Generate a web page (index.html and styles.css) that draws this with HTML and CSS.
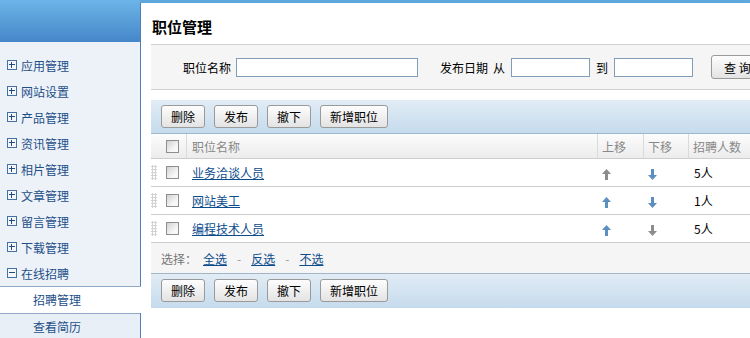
FILE: index.html
```html
<!DOCTYPE html>
<html lang="zh-CN">
<head>
    <meta charset="UTF-8">
    <title>职位管理</title>
    <link rel="stylesheet" href="styles.css">
</head>
<body>
<div class="layout">
    <!-- 左侧菜单 -->
    <aside class="sidebar">
        <div class="sidebar-head"></div>
        <ul class="menu">
            <li><a class="menu-link" href="#"><svg class="toggle" width="10" height="10" viewBox="0 0 10 10" shape-rendering="crispEdges"><rect x="0.5" y="0.5" width="9" height="9" fill="#f3f6fa" stroke="#44719f"/><path d="M2 4.5h6M4.5 2v6" stroke="#1f4d80"/></svg>应用管理</a></li>
            <li><a class="menu-link" href="#"><svg class="toggle" width="10" height="10" viewBox="0 0 10 10" shape-rendering="crispEdges"><rect x="0.5" y="0.5" width="9" height="9" fill="#f3f6fa" stroke="#44719f"/><path d="M2 4.5h6M4.5 2v6" stroke="#1f4d80"/></svg>网站设置</a></li>
            <li><a class="menu-link" href="#"><svg class="toggle" width="10" height="10" viewBox="0 0 10 10" shape-rendering="crispEdges"><rect x="0.5" y="0.5" width="9" height="9" fill="#f3f6fa" stroke="#44719f"/><path d="M2 4.5h6M4.5 2v6" stroke="#1f4d80"/></svg>产品管理</a></li>
            <li><a class="menu-link" href="#"><svg class="toggle" width="10" height="10" viewBox="0 0 10 10" shape-rendering="crispEdges"><rect x="0.5" y="0.5" width="9" height="9" fill="#f3f6fa" stroke="#44719f"/><path d="M2 4.5h6M4.5 2v6" stroke="#1f4d80"/></svg>资讯管理</a></li>
            <li><a class="menu-link" href="#"><svg class="toggle" width="10" height="10" viewBox="0 0 10 10" shape-rendering="crispEdges"><rect x="0.5" y="0.5" width="9" height="9" fill="#f3f6fa" stroke="#44719f"/><path d="M2 4.5h6M4.5 2v6" stroke="#1f4d80"/></svg>相片管理</a></li>
            <li><a class="menu-link" href="#"><svg class="toggle" width="10" height="10" viewBox="0 0 10 10" shape-rendering="crispEdges"><rect x="0.5" y="0.5" width="9" height="9" fill="#f3f6fa" stroke="#44719f"/><path d="M2 4.5h6M4.5 2v6" stroke="#1f4d80"/></svg>文章管理</a></li>
            <li><a class="menu-link" href="#"><svg class="toggle" width="10" height="10" viewBox="0 0 10 10" shape-rendering="crispEdges"><rect x="0.5" y="0.5" width="9" height="9" fill="#f3f6fa" stroke="#44719f"/><path d="M2 4.5h6M4.5 2v6" stroke="#1f4d80"/></svg>留言管理</a></li>
            <li><a class="menu-link" href="#"><svg class="toggle" width="10" height="10" viewBox="0 0 10 10" shape-rendering="crispEdges"><rect x="0.5" y="0.5" width="9" height="9" fill="#f3f6fa" stroke="#44719f"/><path d="M2 4.5h6M4.5 2v6" stroke="#1f4d80"/></svg>下载管理</a></li>
            <li class="open">
                <a class="menu-link" href="#"><svg class="toggle" width="10" height="10" viewBox="0 0 10 10" shape-rendering="crispEdges"><rect x="0.5" y="0.5" width="9" height="9" fill="#f3f6fa" stroke="#44719f"/><path d="M2 4.5h6" stroke="#1f4d80"/></svg>在线招聘</a>
                <ul class="submenu">
                    <li class="current"><a href="#">招聘管理</a></li>
                    <li><a href="#">查看简历</a></li>
                </ul>
            </li>
        </ul>
    </aside>

    <!-- 主内容 -->
    <main class="main">
        <div class="panel">
            <h1 class="panel-title">职位管理</h1>

            <form class="search">
                <label>职位名称</label>
                <input class="field-name" type="text">
                <label class="label-date">发布日期</label>
                <span class="from">从</span>
                <input class="field-date" type="text">
                <span class="to">到</span>
                <input class="field-date" type="text">
                <button class="btn btn-search" type="button">查 询</button>
            </form>

            <div class="toolbar toolbar-top">
                <button class="btn" type="button">删除</button>
                <button class="btn" type="button">发布</button>
                <button class="btn" type="button">撤下</button>
                <button class="btn" type="button">新增职位</button>
            </div>

            <table class="grid">
                <colgroup>
                    <col style="width:35px">
                    <col style="width:411px">
                    <col style="width:46px">
                    <col style="width:45px">
                    <col>
                </colgroup>
                <thead>
                    <tr>
                        <th class="col-check"><input class="check" type="checkbox"></th>
                        <th class="col-name">职位名称</th>
                        <th>上移</th>
                        <th>下移</th>
                        <th>招聘人数</th>
                    </tr>
                </thead>
                <tbody>
                    <tr>
                        <td><div class="row-select"><span class="grip"></span><input class="check" type="checkbox"></div></td>
                        <td class="col-name"><a href="#">业务洽谈人员</a></td>
                        <td class="col-move"><svg class="arrow off" width="9" height="11" viewBox="0 0 9 11"><path d="M4.5 0L9 5H6V11H3V5H0Z"/></svg></td>
                        <td class="col-move"><svg class="arrow" width="9" height="11" viewBox="0 0 9 11"><path d="M4.5 11L9 6H6V0H3V6H0Z"/></svg></td>
                        <td class="col-count">5人</td>
                    </tr>
                    <tr>
                        <td><div class="row-select"><span class="grip"></span><input class="check" type="checkbox"></div></td>
                        <td class="col-name"><a href="#">网站美工</a></td>
                        <td class="col-move"><svg class="arrow" width="9" height="11" viewBox="0 0 9 11"><path d="M4.5 0L9 5H6V11H3V5H0Z"/></svg></td>
                        <td class="col-move"><svg class="arrow" width="9" height="11" viewBox="0 0 9 11"><path d="M4.5 11L9 6H6V0H3V6H0Z"/></svg></td>
                        <td class="col-count">1人</td>
                    </tr>
                    <tr>
                        <td><div class="row-select"><span class="grip"></span><input class="check" type="checkbox"></div></td>
                        <td class="col-name"><a href="#">编程技术人员</a></td>
                        <td class="col-move"><svg class="arrow" width="9" height="11" viewBox="0 0 9 11"><path d="M4.5 0L9 5H6V11H3V5H0Z"/></svg></td>
                        <td class="col-move"><svg class="arrow off" width="9" height="11" viewBox="0 0 9 11"><path d="M4.5 11L9 6H6V0H3V6H0Z"/></svg></td>
                        <td class="col-count">5人</td>
                    </tr>
                </tbody>
            </table>

            <div class="select-bar">
                <span>选择：</span>
                <a href="#">全选</a><span class="sep">-</span>
                <a href="#">反选</a><span class="sep">-</span>
                <a href="#">不选</a>
            </div>

            <div class="toolbar">
                <button class="btn" type="button">删除</button>
                <button class="btn" type="button">发布</button>
                <button class="btn" type="button">撤下</button>
                <button class="btn" type="button">新增职位</button>
            </div>
        </div>
    </main>
</div>
</body>
</html>
```

FILE: styles.css
```css
* {
    margin: 0;
    padding: 0;
    box-sizing: border-box;
}

html, body {
    height: 100%;
    overflow: hidden;
}

body {
    font-family: "Noto Sans CJK SC", "Liberation Sans", sans-serif;
    font-size: 12px;
    color: #000;
    background: #fff;
}

a {
    color: #0b4c8c;
}

.layout {
    display: flex;
    width: 820px;
    height: 100%;
}

/* 左侧菜单 */
.sidebar {
    width: 140px;
    flex: none;
    background: #edf2f8;
}

.sidebar-head {
    height: 42px;
    background: linear-gradient(#6cb5e7, #4586c9);
}

.menu {
    list-style: none;
    padding-top: 10px;
}

.menu-link {
    display: flex;
    align-items: center;
    height: 26px;
    padding-left: 7px;
    color: #1d4f88;
    text-decoration: none;
}

.toggle {
    margin-right: 4px;
    flex: none;
}

.submenu {
    list-style: none;
}

.submenu li {
    height: 27px;
    border-top: 1px solid #8eaac6;
    background: #e9eff6;
}

.submenu li.current {
    position: relative;
    margin-right: -1px;
    background: #fff;
}

.submenu a {
    display: block;
    line-height: 26px;
    padding-left: 33px;
    color: #1d4f88;
    text-decoration: none;
}

/* 主内容 */
.main {
    flex: 1;
    display: flex;
    flex-direction: column;
    padding-top: 3px;
    background: linear-gradient(#5fa8df, #4a8bcc) top / 100% 42px no-repeat;
}

.panel {
    flex: 1;
    background: #fff;
    border-left: 1px solid #4c80b6;
    padding-left: 10px;
}

.panel-title {
    height: 42px;
    padding: 6px 0 0 1px;
    line-height: 35px;
    font-size: 15px;
    font-weight: bold;
    border-bottom: 1px solid #d0d0d0;
}

.search {
    display: flex;
    align-items: center;
    height: 45px;
    padding-left: 32px;
    background: #f5f5f5;
    border-bottom: 1px solid #d0d0d0;
    margin-bottom: 10px;
}

.search input {
    height: 19px;
    border: 1px solid #7f9db9;
    background: #fff;
    font: inherit;
}

.field-name {
    width: 182px;
    margin-left: 5px;
}

.label-date {
    margin-left: 22px;
}

.from {
    margin-left: 5px;
}

.field-date {
    width: 79px;
    margin-left: 6px;
}

.to {
    margin-left: 6px;
}

.btn {
    height: 23px;
    padding: 0 9px;
    font: inherit;
    color: #000;
    border: 1px solid #9a9a9a;
    border-radius: 3px;
    background: linear-gradient(#fdfdfd, #e3e3e3);
    cursor: pointer;
}

.btn-search {
    height: 24px;
    margin-left: 18px;
    padding: 0 12px;
}

.toolbar {
    display: flex;
    gap: 9px;
    height: 34px;
    padding: 5px 0 0 10px;
    background: linear-gradient(#e1ecf5, #c5dbed);
}

.toolbar-top {
    border-bottom: 1px solid #9fb8ce;
}

/* 列表 */
.grid {
    width: 100%;
    table-layout: fixed;
    border-collapse: separate;
    border-spacing: 0;
}

.grid th {
    height: 25px;
    padding-left: 4px;
    text-align: left;
    font-weight: normal;
    color: #888;
    background: linear-gradient(#fcfcfc, #ececec);
    border-left: 1px solid #dadada;
    border-bottom: 1px solid #cdcdcd;
}

.grid th.col-check {
    border-left: none;
    padding-left: 15px;
}

.grid th.col-name {
    padding-left: 5px;
}

.grid td {
    height: 28px;
    border-bottom: 1px solid #cdcdcd;
}

.grid td.col-name {
    padding-left: 6px;
}

.grid td.col-move {
    padding: 3px 0 0 5px;
}

.grid td.col-count {
    padding-left: 6px;
}

.row-select {
    display: flex;
    align-items: center;
}

.grip {
    width: 6px;
    height: 15px;
    background-image: radial-gradient(circle, #d2d2d2 1px, transparent 1.2px);
    background-size: 3px 3px;
}

.check {
    appearance: none;
    display: block;
    width: 13px;
    height: 13px;
    margin: 0;
    border: 1px solid #8e8e8e;
    background: linear-gradient(135deg, #d2d2d2, #f8f8f8 70%);
}

.row-select .check {
    margin-left: 9px;
}

.arrow {
    display: block;
    fill: #5b8fc0;
}

.arrow.off {
    fill: #8c8c8c;
}

.select-bar {
    display: flex;
    align-items: center;
    height: 31px;
    padding-left: 10px;
    background: #f5f5f5;
    border-bottom: 1px solid #a3b6c8;
    color: #777;
}

.select-bar span:first-child {
    margin-right: 6px;
}

.sep {
    padding: 0 10px;
    color: #999;
}
```
